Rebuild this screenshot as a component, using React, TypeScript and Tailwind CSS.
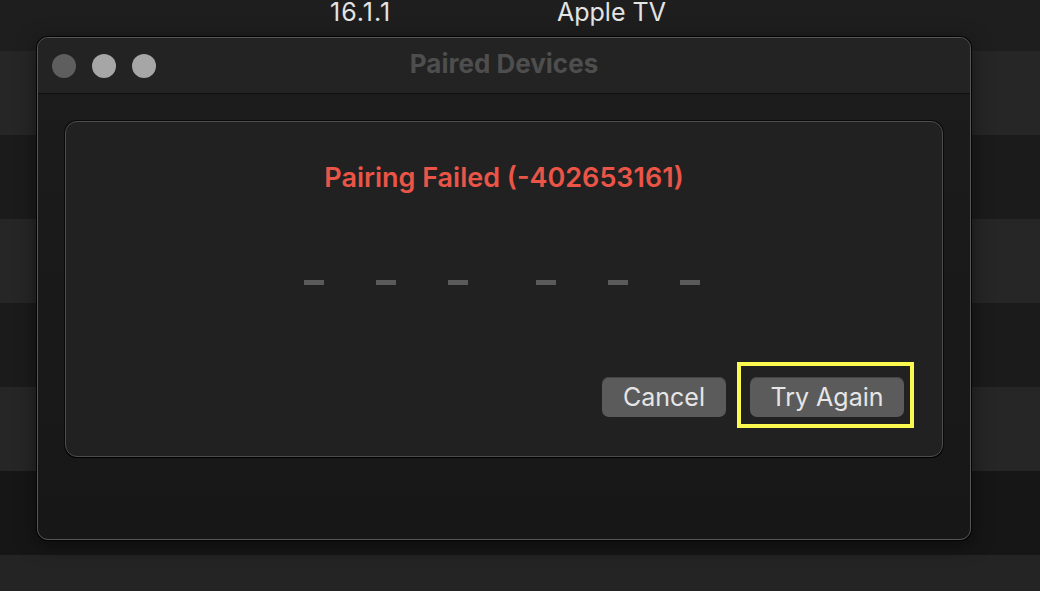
import React from "react";

const stripes = ["h-[51px] bg-[#1e1e1e]", "h-[84px] bg-[#262626]", "h-[84px] bg-[#1b1b1b]", "h-[84px] bg-[#262626]", "h-[84px] bg-[#1b1b1b]", "h-[84px] bg-[#262626]", "h-[84px] bg-[#161616]", "h-[36px] bg-[#242424]"];

export default function App() {
  return (
    <div className="relative w-[1040px] h-[591px] overflow-hidden bg-[#1e1e1e] font-['Inter',sans-serif]">
      {/* table rows behind the sheet */}
      <div className="flex flex-col">
        {stripes.map((cls, i) => (
          <div key={i} className={cls}>
            {i === 0 && (
              <div className="relative h-full text-[25px] leading-none text-[#e4e4e4]">
                <span className="absolute left-[330px] top-0 tracking-[1px]">16.1.1</span>
                <span className="absolute left-[557px] top-0">Apple TV</span>
              </div>
            )}
          </div>
        ))}
      </div>

      {/* Paired Devices window */}
      <div className="absolute left-[37px] top-[37px] w-[934px] h-[503px] rounded-[11px] border border-[#565656] shadow-[0_0_0_1px_#050505,0_4px_20px_rgba(0,0,0,0.5)] bg-gradient-to-b from-[#1c1c1c] to-[#171717] overflow-hidden flex flex-col">
        <div className="h-[56px] shrink-0 flex items-center px-[14px] bg-[#232323] border-b border-[#101010] relative">
          <div className="flex gap-[16px]">
            <span className="w-[24px] h-[24px] rounded-full bg-[#5e5e5e]" />
            <span className="w-[24px] h-[24px] rounded-full bg-[#a6a6a6]" />
            <span className="w-[24px] h-[24px] rounded-full bg-[#a6a6a6]" />
          </div>
          <div className="absolute inset-0 flex items-center justify-center text-[26px] font-bold text-[#4e4e4e] -translate-y-[2px]">
            Paired Devices
          </div>
        </div>

        <div className="px-[27px] pt-[27px]">
          <div className="h-[336px] rounded-[12px] bg-[#212121] border border-[#4c4c4c] shadow-[0_1px_0_#000,0_0_0_1px_#0a0a0a] flex flex-col items-center">
            <div className="mt-[40px] text-[27px] font-semibold text-[#ea5548] leading-[32px]">
              Pairing Failed (-402653161)
            </div>
            <div className="mt-[86px] flex gap-[68px] -ml-[4px]">
              <div className="flex gap-[52px]">
                <span className="w-[20px] h-[5px] bg-[#5a5a5a]" />
                <span className="w-[20px] h-[5px] bg-[#5a5a5a]" />
                <span className="w-[20px] h-[5px] bg-[#5a5a5a]" />
              </div>
              <div className="flex gap-[52px]">
                <span className="w-[20px] h-[5px] bg-[#5a5a5a]" />
                <span className="w-[20px] h-[5px] bg-[#5a5a5a]" />
                <span className="w-[20px] h-[5px] bg-[#5a5a5a]" />
              </div>
            </div>
            <div className="mt-[92px] self-end mr-[38px] flex gap-[24px]">
              <button className="w-[124px] h-[40px] rounded-[7px] bg-[#5b5b5b] text-[25px] leading-none text-[#e6e6e6] shadow-[0_1px_0_#444_inset]">
                Cancel
              </button>
              <div className="relative">
                <button className="w-[154px] h-[40px] rounded-[7px] bg-[#5b5b5b] text-[25px] leading-none text-[#e6e6e6] shadow-[0_1px_0_#444_inset]">
                  Try Again
                </button>
                <div className="absolute -left-[13px] -right-[10px] -top-[15px] -bottom-[11px] border-4 border-[#fcf94f]" />
              </div>
            </div>
          </div>
        </div>
      </div>
    </div>
  );
}
